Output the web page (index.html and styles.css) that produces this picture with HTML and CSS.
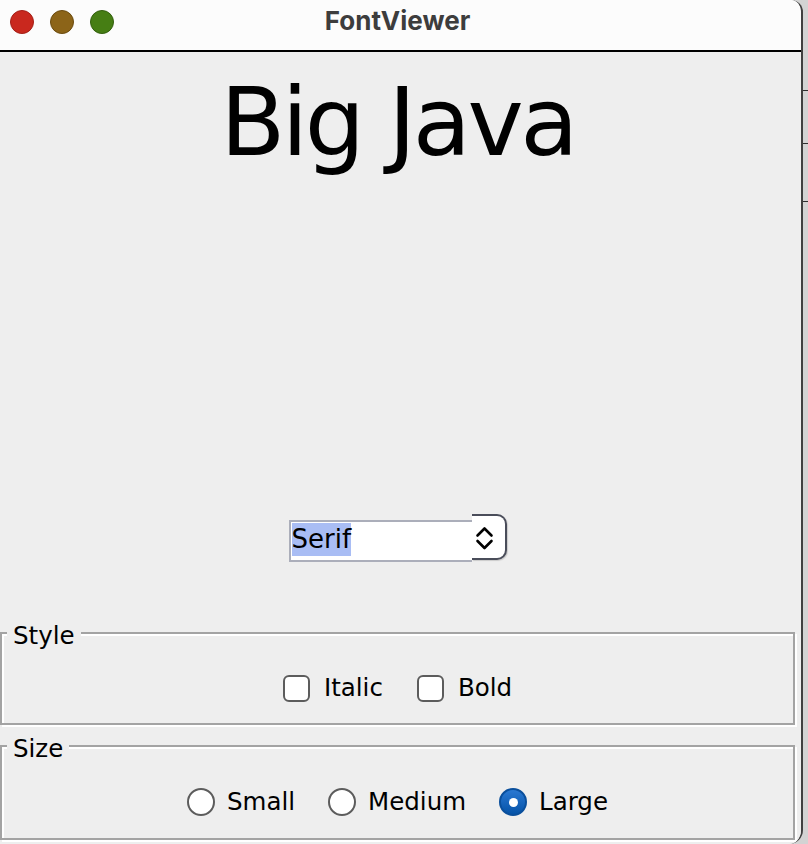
FILE: index.html
```html
<!DOCTYPE html>
<html lang="en">
<head>
<meta charset="utf-8">
<title>FontViewer</title>
<link rel="stylesheet" href="styles.css">
</head>
<body>
<div class="window">
  <div class="titlebar">
    <div class="lights">
      <span class="light red"></span>
      <span class="light yellow"></span>
      <span class="light green"></span>
    </div>
    <div class="title">FontViewer</div>
    <div></div>
  </div>
  <div class="content">
    <div class="sample">Big Java</div>
    <div class="combo-row">
      <div class="combo">
        <div class="field"><span class="sel">Serif</span></div>
        <div class="spin">
          <svg width="33" height="42" viewBox="0 0 33 42">
            <path d="M5.5 19.5 L12.5 12.5 L19.5 19.5 M5.5 25 L12.5 32 L19.5 25" fill="none" stroke="#000" stroke-width="2.6" stroke-linecap="round" stroke-linejoin="round"/>
          </svg>
        </div>
      </div>
    </div>
    <fieldset class="group style-group">
      <legend>Style</legend>
      <div class="options">
        <label class="opt"><span class="box"></span><span class="lbl">Italic</span></label>
        <label class="opt"><span class="box"></span><span class="lbl">Bold</span></label>
      </div>
    </fieldset>
    <fieldset class="group size-group">
      <legend>Size</legend>
      <div class="options">
        <label class="opt radio-opt"><span class="radio"></span><span class="lbl">Small</span></label>
        <label class="opt radio-opt"><span class="radio"></span><span class="lbl">Medium</span></label>
        <label class="opt radio-opt"><span class="radio on"></span><span class="lbl">Large</span></label>
      </div>
    </fieldset>
  </div>
</div>
</body>
</html>
```
FILE: styles.css
```css
html, body {
  margin: 0;
  padding: 0;
}
body {
  width: 808px;
  height: 844px;
  overflow: hidden;
  background:
    linear-gradient(#2e2e2e, #2e2e2e) 0 90px / 100% 1px no-repeat,
    linear-gradient(#2e2e2e, #2e2e2e) 0 143px / 100% 1px no-repeat,
    linear-gradient(#2e2e2e, #2e2e2e) 0 201px / 100% 1px no-repeat,
    #d3d3d3;
  font-family: "DejaVu Sans", "Liberation Sans", sans-serif;
}
.window {
  width: 801px;
  height: 844px;
  border-right: 2px solid #404040;
  border-top-right-radius: 12px;
  border-bottom-right-radius: 14px;
  overflow: hidden;
  display: flex;
  flex-direction: column;
  background: #eeeeee;
}
.titlebar {
  height: 50px;
  flex: none;
  background: #fcfcfc;
  border-bottom: 2px solid #000;
  display: grid;
  grid-template-columns: 1fr auto 1fr;
  align-items: start;
  padding: 0 16px 0 10px;
}
.lights {
  display: flex;
  gap: 16px;
  padding-top: 10px;
}
.light {
  width: 24px;
  height: 24px;
  border-radius: 50%;
  box-sizing: border-box;
  border: 1px solid;
}
.red { background: #c9281e; border-color: #a41f17; }
.yellow { background: #8c6418; border-color: #6b4b0f; }
.green { background: #467e14; border-color: #335f0e; }
.title {
  font-family: Inter, "Liberation Sans", sans-serif;
  font-weight: 700;
  font-size: 26px;
  line-height: 41px;
  color: #3d3d3d;
}
.content {
  flex: 1;
  display: flex;
  flex-direction: column;
  background: #eeeeee;
}
.sample {
  margin: 23px 6px 0 0;
  text-align: center;
  font-size: 95px;
  line-height: 95px;
  letter-spacing: -3.5px;
  color: #000;
}
.combo-row {
  margin: 344px 6px 0 0;
  display: flex;
  justify-content: center;
}
.combo {
  display: flex;
  align-items: flex-start;
}
.field {
  margin-top: 6px;
  width: 183px;
  height: 42px;
  box-sizing: border-box;
  border: 2px solid #abaeba;
  border-right: none;
  background: #fff;
  padding: 1px 0 0 1px;
}
.sel {
  display: inline-block;
  background: #a9bdf4;
  font-size: 26px;
  line-height: 33px;
  color: #000;
}
.spin {
  width: 35px;
  height: 46px;
  box-sizing: border-box;
  border: 2px solid #4a4d5a;
  border-left: none;
  border-radius: 0 10px 10px 0;
  background: #fff;
  box-shadow: 1px 1px 1px rgba(0,0,0,0.15);
}
.spin svg {
  display: block;
}
.group {
  margin: 0 6px 0 0;
  padding: 0;
  border: 2px solid #a3a3a3;
  box-shadow: inset 2px 2px 0 #ffffff, 2px 2px 0 #ffffff;
  min-inline-size: 0;
}
.group legend {
  margin-left: 5px;
  padding: 6px 6px 0 6px;
  font-size: 24.5px;
  line-height: 28px;
  background: #eeeeee;
  color: #000;
}
.style-group {
  margin-top: 54px;
  padding: 24px 0 21px;
}
.size-group {
  margin-top: 4px;
  padding: 25px 0 22px;
}
.options {
  display: flex;
  justify-content: center;
  gap: 34px;
}
.size-group .options {
  gap: 33px;
}
.opt {
  display: flex;
  align-items: center;
  gap: 14px;
  height: 28px;
}
.radio-opt {
  gap: 12px;
}
.lbl {
  font-size: 24.5px;
  line-height: 28px;
  color: #000;
}
.box {
  width: 27px;
  height: 27px;
  box-sizing: border-box;
  border: 2px solid #5c5c5c;
  border-radius: 6px;
  background: #fff;
}
.radio {
  width: 28px;
  height: 28px;
  box-sizing: border-box;
  border: 2px solid #5c5c5c;
  border-radius: 50%;
  background: #fff;
  display: flex;
  align-items: center;
  justify-content: center;
}
.radio.on {
  border-color: #0a4f9c;
  background: linear-gradient(#2a78d2, #0553a8);
}
.radio.on::after {
  content: "";
  width: 9px;
  height: 9px;
  border-radius: 50%;
  background: #fff;
}
```
